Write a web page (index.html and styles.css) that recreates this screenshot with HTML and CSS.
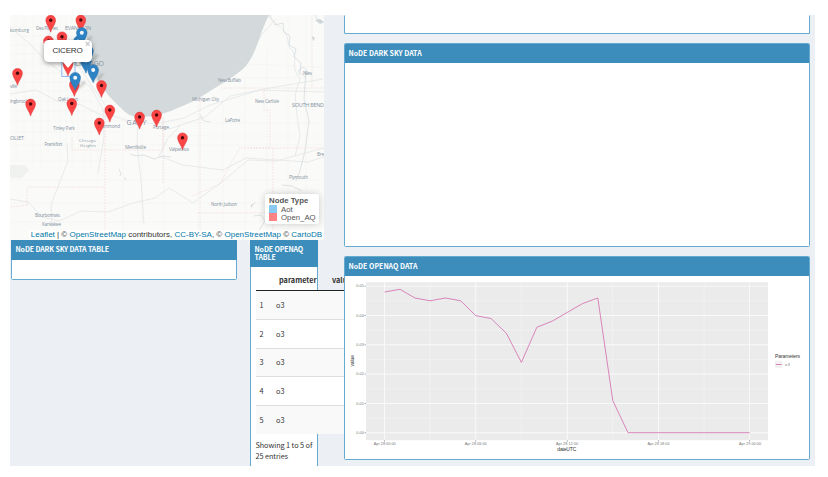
FILE: index.html
```html
<!DOCTYPE html>
<html lang="en">
<head>
<meta charset="utf-8">
<title>Node dashboard</title>
<link rel="stylesheet" href="styles.css">
</head>
<body>
<main class="app">
  <section class="left">
    <div class="map">
      <svg class="tiles" viewBox="10 15 314 225">
        <defs>
          <g id="red"><path d="M0 12C-.8 8-4.9 4-4.9 0a4.9 4.9 0 0 1 9.8 0C4.9 4 .8 8 0 12z" fill="#fc4545" stroke="#d93336" stroke-width=".5"/><circle r="1.7" fill="#49090b"/></g>
          <g id="blue"><path d="M1 12 8 3l3 1-5 6z" fill="#555" opacity=".25" filter="url(#soft)"/><path d="M0 12.7C-1 9-5.3 5-5.3 0a5.3 5.3 0 0 1 10.6 0C5.3 5 1 9 0 12.7z" fill="#2d83c4" stroke="#2871ac" stroke-width=".5"/><circle r="2" fill="#f2f7fb"/></g>
          <filter id="soft" x="-50%" y="-50%" width="200%" height="200%"><feGaussianBlur stdDeviation="1"/></filter>
        </defs>
        <rect x="10" y="15" width="314" height="225" fill="#fafaf8"/>
        <path d="M10 165h15l4 5-7 8H10z" fill="#f0f2f0"/>
        <g class="streets">
          <path d="M16 15v146M24 15v125M33 15v150M41 15v155M48 15v142M54 15v100M60 15v150M66 15v135M72 15v153M78 25v115M84 45v130M91 70v100M98 86v94M10 27h72M10 36h75M10 45h78M10 54h80M10 64h82M10 73h86M10 82h93M10 91h97M10 101h106M10 111h115M10 121h175M10 132h110M10 145h314M10 161h98M10 180h314M10 203h314M10 222h314M123 117v120M142 119v105M164 115v120M198 100v138M223 96v140M245 75v165M267 50v190M288 15v225M306 15v225M248 64l75 3M235 78h89M160 123h164M158 136h166"/>
        </g>
        <g class="roads">
          <path d="M10 27 30 44 45 60 65 75 90 86 105 113 125 120 155 124 184 118 210 105 260 90 324 92M51 15 49 40 58 54 80 68 94 89 105 105M10 94 36 90 57 101 81 105 109 119M10 199 28 202 42 217 59 221 81 211 108 212 133 203 155 198 169 188 193 203 222 182 248 160 276 161 324 148M67 143 68 161 59 184 51 205 52 224M103 109 104 137 98 173M138 121 137 144 141 180 144 225M169 129l36-12 25-21 40-8 53-9M271 15c-2 6 10 10 14 18 5 7 1 13 8 18 5 12-3 15 7 28l-5 16 2 20 3 21-5 20M222 82l23-18 17-30 14-15M180 126l-12 12-9 18 24 9 40 5 23-12 62 4 16-5"/>
        </g>
        <path d="M83 15C86 31 88 47 92 66 95 77 100 85 106 92 110 98 118 105 123 110 128 115 133 117 142 117 153 117 162 114 171 111 185 105 195 101 207 93 221 84 235 77 246 66 258 50 258 37 269 15z" fill="#d4dadc"/>
        <g class="water">
          <path d="M270 15c-2 5 6 6 5 10l8-2 1 9 6 4-1 9 7 4-2 8 7 6-1 9 6 6M305 68c-5-2-8 4-5 7M306 69l-2 30 5 22-4 30-5 20-4 10M130 154l6 2 8-1 10 4 8-3 9 1M282 185l10 1 10 5M254 216l7-1 4 6-5 8-5 5M315 15l3 6 5 2M119 169l2 5-1 2M124 177l2 3M200 115l4 6 6 1"/>
        </g>
        <g class="borders"><path d="M105 112v125M27 205v-18h78M200 98v138M221 88h103M264 88v22h6v38h-22M72 137v13h91v-32M312 15v73M163 118v65M273 148v92M324 148h-84l-12 20-8 16-28 12M27 205l-17 2M198 213h75"/></g>
        <path d="M251 205l6-3-4 3-2 3zM315 20l5 4 4-2-4-3zM312 36l3 2-2 3z" fill="#cfd6d9"/>
        <rect x="61.8" y="62" width="13.2" height="14.5" class="selected"/>
        <g class="places">
          <text x="9" y="32" textLength="20">aumburg</text><text x="36" y="30" textLength="22">Des Plaines</text>
          <text x="65" y="30" textLength="26" class="town">EVANSTON</text><text x="75" y="66" textLength="29" class="city">CHICAGO</text>
          <text x="10" y="88" textLength="7">ville</text><text x="10" y="103" textLength="18">ingbrook</text>
          <text x="58" y="100.5" textLength="20">Oak Lawn</text><text x="53" y="130" textLength="22">Tinley Park</text><text x="10" y="140" textLength="14" class="town">OLIET</text>
          <text x="44.5" y="146" textLength="18">Frankfort</text><text x="79" y="141.6" textLength="17" class="tight">Chicago</text><text x="80" y="146.6" textLength="16" class="tight">Heights</text>
          <text x="98" y="127.5" textLength="22">Hammond</text><text x="126.5" y="124.5" textLength="20" class="city">GARY</text><text x="153" y="129" textLength="16">Portage</text>
          <text x="125" y="149" textLength="21">Merrillville</text><text x="169" y="151" textLength="20">Valparaiso</text>
          <text x="35" y="216.5" textLength="25">Bourbonnais</text><text x="42" y="225.5" textLength="19">Kankakee</text>
          <text x="218" y="82.2" textLength="23">New Buffalo</text><text x="192" y="101.3" textLength="27">Michigan City</text><text x="255" y="103" textLength="24">New Carlisle</text>
          <text x="303" y="75" textLength="9">Niles</text><text x="292" y="107" textLength="32" class="town">SOUTH BEND</text><text x="225" y="121.5" textLength="15">LaPorte</text>
          <text x="289" y="178.5" textLength="19">Plymouth</text><text x="317" y="156" textLength="7">Bre</text><text x="211" y="205.5" textLength="26">North Judson</text>
        </g>
        <use href="#red" x="50.7" y="20.2"/><use href="#red" x="80.8" y="20"/><use href="#red" x="62" y="36.8"/><use href="#red" x="48.5" y="41"/>
        <use href="#blue" x="79" y="41"/><use href="#blue" x="81.8" y="32.8"/><use href="#blue" x="88" y="51"/>
        <use href="#red" x="68" y="64"/><use href="#blue" x="86" y="60.5"/><use href="#blue" x="93.2" y="70"/>
        <use href="#red" x="17.5" y="73.3"/><use href="#red" x="74.4" y="84.5"/><use href="#blue" x="75.2" y="77.7"/><use href="#red" x="101.5" y="85.5"/>
        <use href="#red" x="30.6" y="104"/><use href="#red" x="71.8" y="103.5"/><use href="#red" x="109.8" y="110"/><use href="#red" x="99.3" y="123"/>
        <use href="#red" x="139.6" y="117"/><use href="#red" x="156.6" y="115"/><use href="#red" x="182.5" y="137.8"/>
      </svg>
      <div class="popup">CICERO<span class="close">×</span></div>
      <div class="legend"><b>Node Type</b><span><i class="aot"></i>Aot</span><span><i class="aq"></i>Open_AQ</span></div>
      <div class="credit"><a>Leaflet</a> | © <a>OpenStreetMap</a> contributors, <a>CC-BY-SA</a>, © <a>OpenStreetMap</a> © <a>CartoDB</a></div>
    </div>
    <div class="tables">
      <article class="box sky"><h2>NoDE DARK SKY DATA TABLE</h2></article>
      <article class="box aqtable">
        <h2>NoDE OPENAQ TABLE</h2>
        <table>
          <thead><tr><th></th><th>parameter</th><th class="value">value</th></tr></thead>
          <tbody>
            <tr><td>1</td><td>o3</td><td></td></tr><tr><td>2</td><td>o3</td><td></td></tr><tr><td>3</td><td>o3</td><td></td></tr><tr><td>4</td><td>o3</td><td></td></tr><tr><td>5</td><td>o3</td><td></td></tr>
          </tbody>
        </table>
        <p>Showing 1 to 5 of 25 entries</p>
      </article>
    </div>
  </section>
  <section class="right">
    <article class="box top"></article>
    <article class="box data"><h2>NoDE DARK SKY DATA</h2></article>
    <article class="box data"><h2>NoDE OPENAQ DATA</h2>
      <svg class="chart" viewBox="345 275.8 463 183">
        <rect x="366" y="282" width="402" height="158" fill="#ebebeb"/>
        <path class="minor" d="M366 300.6h402M366 330h402M366 359.3h402M366 388.6h402M366 418h402M430 282v158M521.3 282v158M612.5 282v158M704.2 282v158"/>
        <path class="major" d="M366 286h402M366 315.3h402M366 344.5h402M366 373.9h402M366 403.3h402M366 432.5h402M384.5 282v158M475.7 282v158M567.3 282v158M658.5 282v158M749.6 282v158"/>
        <path class="ticks" d="M364.5 286h1.5M364.5 315.3h1.5M364.5 344.5h1.5M364.5 373.9h1.5M364.5 403.3h1.5M364.5 432.5h1.5M384.5 440v1.5M475.7 440v1.5M567.3 440v1.5M658.5 440v1.5M749.6 440v1.5"/>
        <polyline class="series" points="384.5,291.8 400,289.1 415,297.8 430,300.6 445.5,297.8 460.7,300.6 475.7,315.4 491,318.3 506.3,333 521.4,362.2 536.8,327.1 552.3,320.9 567.3,312.2 582.5,303.4 597.8,297.8 612.8,400.5 628,432.5 749.6,432.5"/>
        <g class="axis">
          <text x="356.3" y="287.3" textLength="7.6">0.05</text><text x="356.3" y="316.6" textLength="7.6">0.04</text><text x="356.3" y="345.8" textLength="7.6">0.03</text><text x="356.3" y="375.2" textLength="7.6">0.02</text><text x="356.3" y="404.6" textLength="7.6">0.01</text><text x="356.3" y="433.8" textLength="7.6">0.00</text>
          <text x="373.7" y="444.7" textLength="22">Apr 28 00:00</text><text x="464.7" y="444.7" textLength="22">Apr 28 06:00</text><text x="556" y="444.7" textLength="22">Apr 28 12:00</text><text x="647.5" y="444.7" textLength="22">Apr 28 18:00</text><text x="739" y="444.7" textLength="22">Apr 29 00:00</text>
          <text x="785" y="365.8" textLength="4.8">o3</text>
        </g>
        <g class="titles"><text x="557.3" y="450.5" textLength="19">dateUTC</text><text transform="translate(354 366.3) rotate(-90)" textLength="11.5">value</text><text x="775" y="357.9" textLength="25">Parameters</text></g>
        <rect x="775" y="360.5" width="7.4" height="7.2" fill="#f2f2f2"/><path class="series" d="M775.8 364.3h6"/>
      </svg>
    </article>
  </section>
</main>
</body>
</html>
```
FILE: styles.css
```css
* { box-sizing: border-box; }
body { margin: 0; padding: 15px 0 0 10px; background: #fff; font-family: "Noto Sans CJK SC", sans-serif; color: #333; }
.app { width: 805px; height: 451px; background: #ecf0f5; display: flex; gap: 20px; overflow: hidden; }
.left { width: 314px; flex: none; }
.map { position: relative; width: 314px; height: 225px; font-family: "Liberation Sans", sans-serif; }
.tiles { display: block; width: 314px; height: 225px; }
.streets path { fill: none; stroke: #f3f4f3; stroke-width: .7; }
.roads path { fill: none; stroke: #e5e8ea; stroke-width: .9; }
.water path { fill: none; stroke: #d5dcdf; stroke-width: .8; }
.borders path { fill: none; stroke: #f0dcde; stroke-width: .7; stroke-dasharray: 2 1; }
.selected { fill: none; stroke: #8dbdf4; stroke-width: 1; }
.places { font: 4.6px "Open Sans", sans-serif; fill: #84929f; }
.places .tight { font-size: 4px; }
.places .town { font-size: 5.4px; }
.places .city { font-size: 7px; }
.popup { position: absolute; left: 34px; top: 24.5px; width: 48px; height: 22.5px; border-radius: 4.5px; background: #fff; box-shadow: 0 1.5px 5px rgba(0,0,0,.4); font-size: 8.1px; letter-spacing: -.25px; line-height: 22px; padding-left: 8.5px; }
.popup::after { content: ""; position: absolute; left: 18.5px; top: 22px; border: 5.5px solid transparent; border-top: 6px solid #fff; border-bottom: 0; }
.close { position: absolute; right: 2px; top: 0; font: bold 9px/9px "Liberation Sans", sans-serif; color: #c3c3c3; }
.legend { position: absolute; left: 255px; top: 179px; width: 54px; height: 30px; padding: 2px 4px; background: rgba(255,255,255,.9); border-radius: 3px; box-shadow: 0 0 7px rgba(0,0,0,.2); font-size: 7.8px; line-height: 9px; color: #555; white-space: nowrap; }
.legend b, .legend span { display: block; }
.legend span { height: 8px; }
.legend i { display: inline-block; width: 7.5px; height: 8px; margin-right: 4.5px; vertical-align: top; }
.aot { background: #89caf2; }
.aq { background: #ff8385; }
.credit { position: absolute; right: 0; bottom: 0; width: 295px; height: 10px; padding-right: 2px; background: rgba(255,255,255,.7); font-size: 8px; line-height: 10.5px; text-align: right; white-space: nowrap; }
.credit a { color: #0078a8; }
.tables { display: flex; gap: 13px; padding-left: 1px; align-items: flex-start; }
.box { border: 1px solid #65aacf; border-radius: 1.5px; background: #fff; }
.box h2 { margin: -1px -1px 0; padding: 5px 4.5px; height: 19.5px; background: #3c8dbc; color: #fff; font-size: 7px; line-height: 9px; font-weight: 700; letter-spacing: -.12px; white-space: nowrap; }
.data h2 { padding-top: 6px; letter-spacing: 0; }
.sky { width: 226px; height: 39.5px; flex: none; }
.aqtable { width: 67.5px; height: 240px; flex: none; }
.aqtable h2 { height: 26.5px; line-height: 8px; white-space: normal; }
.aqtable table { width: 110px; margin: 3.5px 0 0 4.5px; border-collapse: collapse; table-layout: fixed; font-size: 7.3px; line-height: 10px; }
.aqtable th { height: 20.5px; padding: 0; border-bottom: 1px solid #222; font-weight: 700; text-align: left; white-space: nowrap; }
.aqtable th:first-child { width: 19.5px; }
.aqtable th:nth-child(2) { width: 48px; padding-left: 4px; }
.aqtable th.value { padding-left: 9px; }
.aqtable td { height: 28.8px; padding: 0 0 0 4px; border-top: 1px solid #ddd; background: #fff; }
.aqtable td:nth-child(2) { padding-left: 1px; }
.aqtable tr:nth-child(odd) td { background: #f9f9f9; }
.aqtable tbody tr:first-child td { border-top: 0; }
.aqtable p { width: 60px; margin: 6px 0 0 4.5px; font-size: 7.3px; line-height: 10.4px; letter-spacing: -.08px; }
.right { width: 465.5px; flex: none; position: relative; display: flex; flex-direction: column; gap: 9px; }
.top { height: 19px; flex: none; border-top: 0; }
.data { height: 204px; flex: none; overflow: hidden; }
.chart { display: block; width: 463px; height: 183px; }
.minor { fill: none; stroke: #f4f4f4; stroke-width: .5; }
.major { fill: none; stroke: #fafafa; stroke-width: .9; }
.ticks { stroke: #777; stroke-width: .6; }
.series { fill: none; stroke: #d678b3; stroke-width: .9; }
.axis { font: 3.8px "Liberation Sans", sans-serif; fill: #777; }
.titles { font: 5px "Liberation Sans", sans-serif; fill: #333; }
```
